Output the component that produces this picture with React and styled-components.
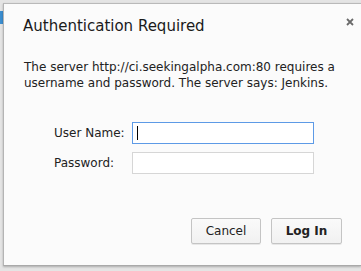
import styled, { createGlobalStyle } from "styled-components";

const GlobalStyle = createGlobalStyle`
  html, body {
    margin: 0;
    padding: 0;
    width: 361px;
    height: 271px;
    overflow: hidden;
    background: #e4e4e4;
    font-family: "DejaVu Sans", "Liberation Sans", sans-serif;
  }
`;

const Page = styled.div`
  display: flex;
  height: 271px;
  padding-top: 3px;
  box-sizing: border-box;
  align-items: flex-start;
`;

const Strip = styled.div`
  width: 3px;
  flex-shrink: 0;
  display: flex;
  flex-direction: column;
  padding-top: 8px;
`;

const TabBit = styled.div`
  height: 13px;
  background: #3b8ed0;
`;

const Dialog = styled.div`
  flex: 1;
  height: 263px;
  box-sizing: border-box;
  background: #fbfbfb;
  border-top: 1px solid #b9b9b9;
  border-left: 1px solid #b4b4b4;
  border-bottom: 1px solid #a9a9a9;
  box-shadow: 0 1px 2px rgba(0, 0, 0, 0.25);
  display: flex;
  flex-direction: column;
  padding: 0 19px 0 19px;
  color: #222;
`;

const Header = styled.div`
  display: flex;
  justify-content: space-between;
  align-items: flex-start;
  padding-top: 12px;
`;

const Title = styled.h1`
  margin: 0;
  font-size: 15px;
  line-height: 20px;
  font-weight: normal;
  color: #1a1a1a;
`;

const Close = styled.svg`
  width: 8px;
  height: 8px;
  margin-top: 2px;
  margin-right: -12px;
`;

const Message = styled.p`
  margin: 23px 0 0 1px;
  font-size: 12px;
  line-height: 16px;
  color: #222;
`;

const Form = styled.div`
  display: grid;
  grid-template-columns: 78px 182px;
  row-gap: 8px;
  align-items: center;
  margin: 31px 0 0 31px;
`;

const Label = styled.label`
  font-size: 12px;
  color: #222;
`;

const Input = styled.input`
  height: 22px;
  box-sizing: border-box;
  border: 1px solid ${(p) => (p.$focused ? "#5d9ae6" : "#d6d6d6")};
  background: #fff;
  outline: none;
  padding: 0 4px;
  font-size: 12px;
  font-family: inherit;
`;

const Caret = styled.div`
  height: 22px;
  box-sizing: border-box;
  border: 1px solid #5d9ae6;
  background: #fff;
  display: flex;
  align-items: center;
  padding-left: 4px;
`;

const CaretLine = styled.span`
  width: 1px;
  height: 14px;
  background: #000;
`;

const Footer = styled.div`
  margin-top: auto;
  margin-bottom: 21px;
  display: flex;
  justify-content: flex-end;
  gap: 10px;
`;

const Button = styled.button`
  width: ${(p) => p.$w}px;
  height: 26px;
  border: 1px solid #c4c4c4;
  border-radius: 2px;
  background: linear-gradient(#fafafa, #f1f1f1);
  box-shadow: 0 1px 0 rgba(0, 0, 0, 0.08);
  font-family: inherit;
  font-size: 12px;
  font-weight: ${(p) => (p.$primary ? "bold" : "normal")};
  color: #222;
  padding: 0;
`;

export default function App() {
  return (
    <>
      <GlobalStyle />
      <Page>
        <Strip>
          <TabBit />
        </Strip>
        <Dialog>
          <Header>
            <Title>Authentication Required</Title>
            <Close viewBox="0 0 8 8">
              <path d="M1 1L7 7M7 1L1 7" stroke="#6a6a6a" strokeWidth="1.8" />
            </Close>
          </Header>
          <Message>
            The server http://ci.seekingalpha.com:80 requires a username and
            password. The server says: Jenkins.
          </Message>
          <Form>
            <Label>User Name:</Label>
            <Caret>
              <CaretLine />
            </Caret>
            <Label>Password:</Label>
            <Input type="password" />
          </Form>
          <Footer>
            <Button $w={70}>Cancel</Button>
            <Button $w={71} $primary>
              Log In
            </Button>
          </Footer>
        </Dialog>
      </Page>
    </>
  );
}
